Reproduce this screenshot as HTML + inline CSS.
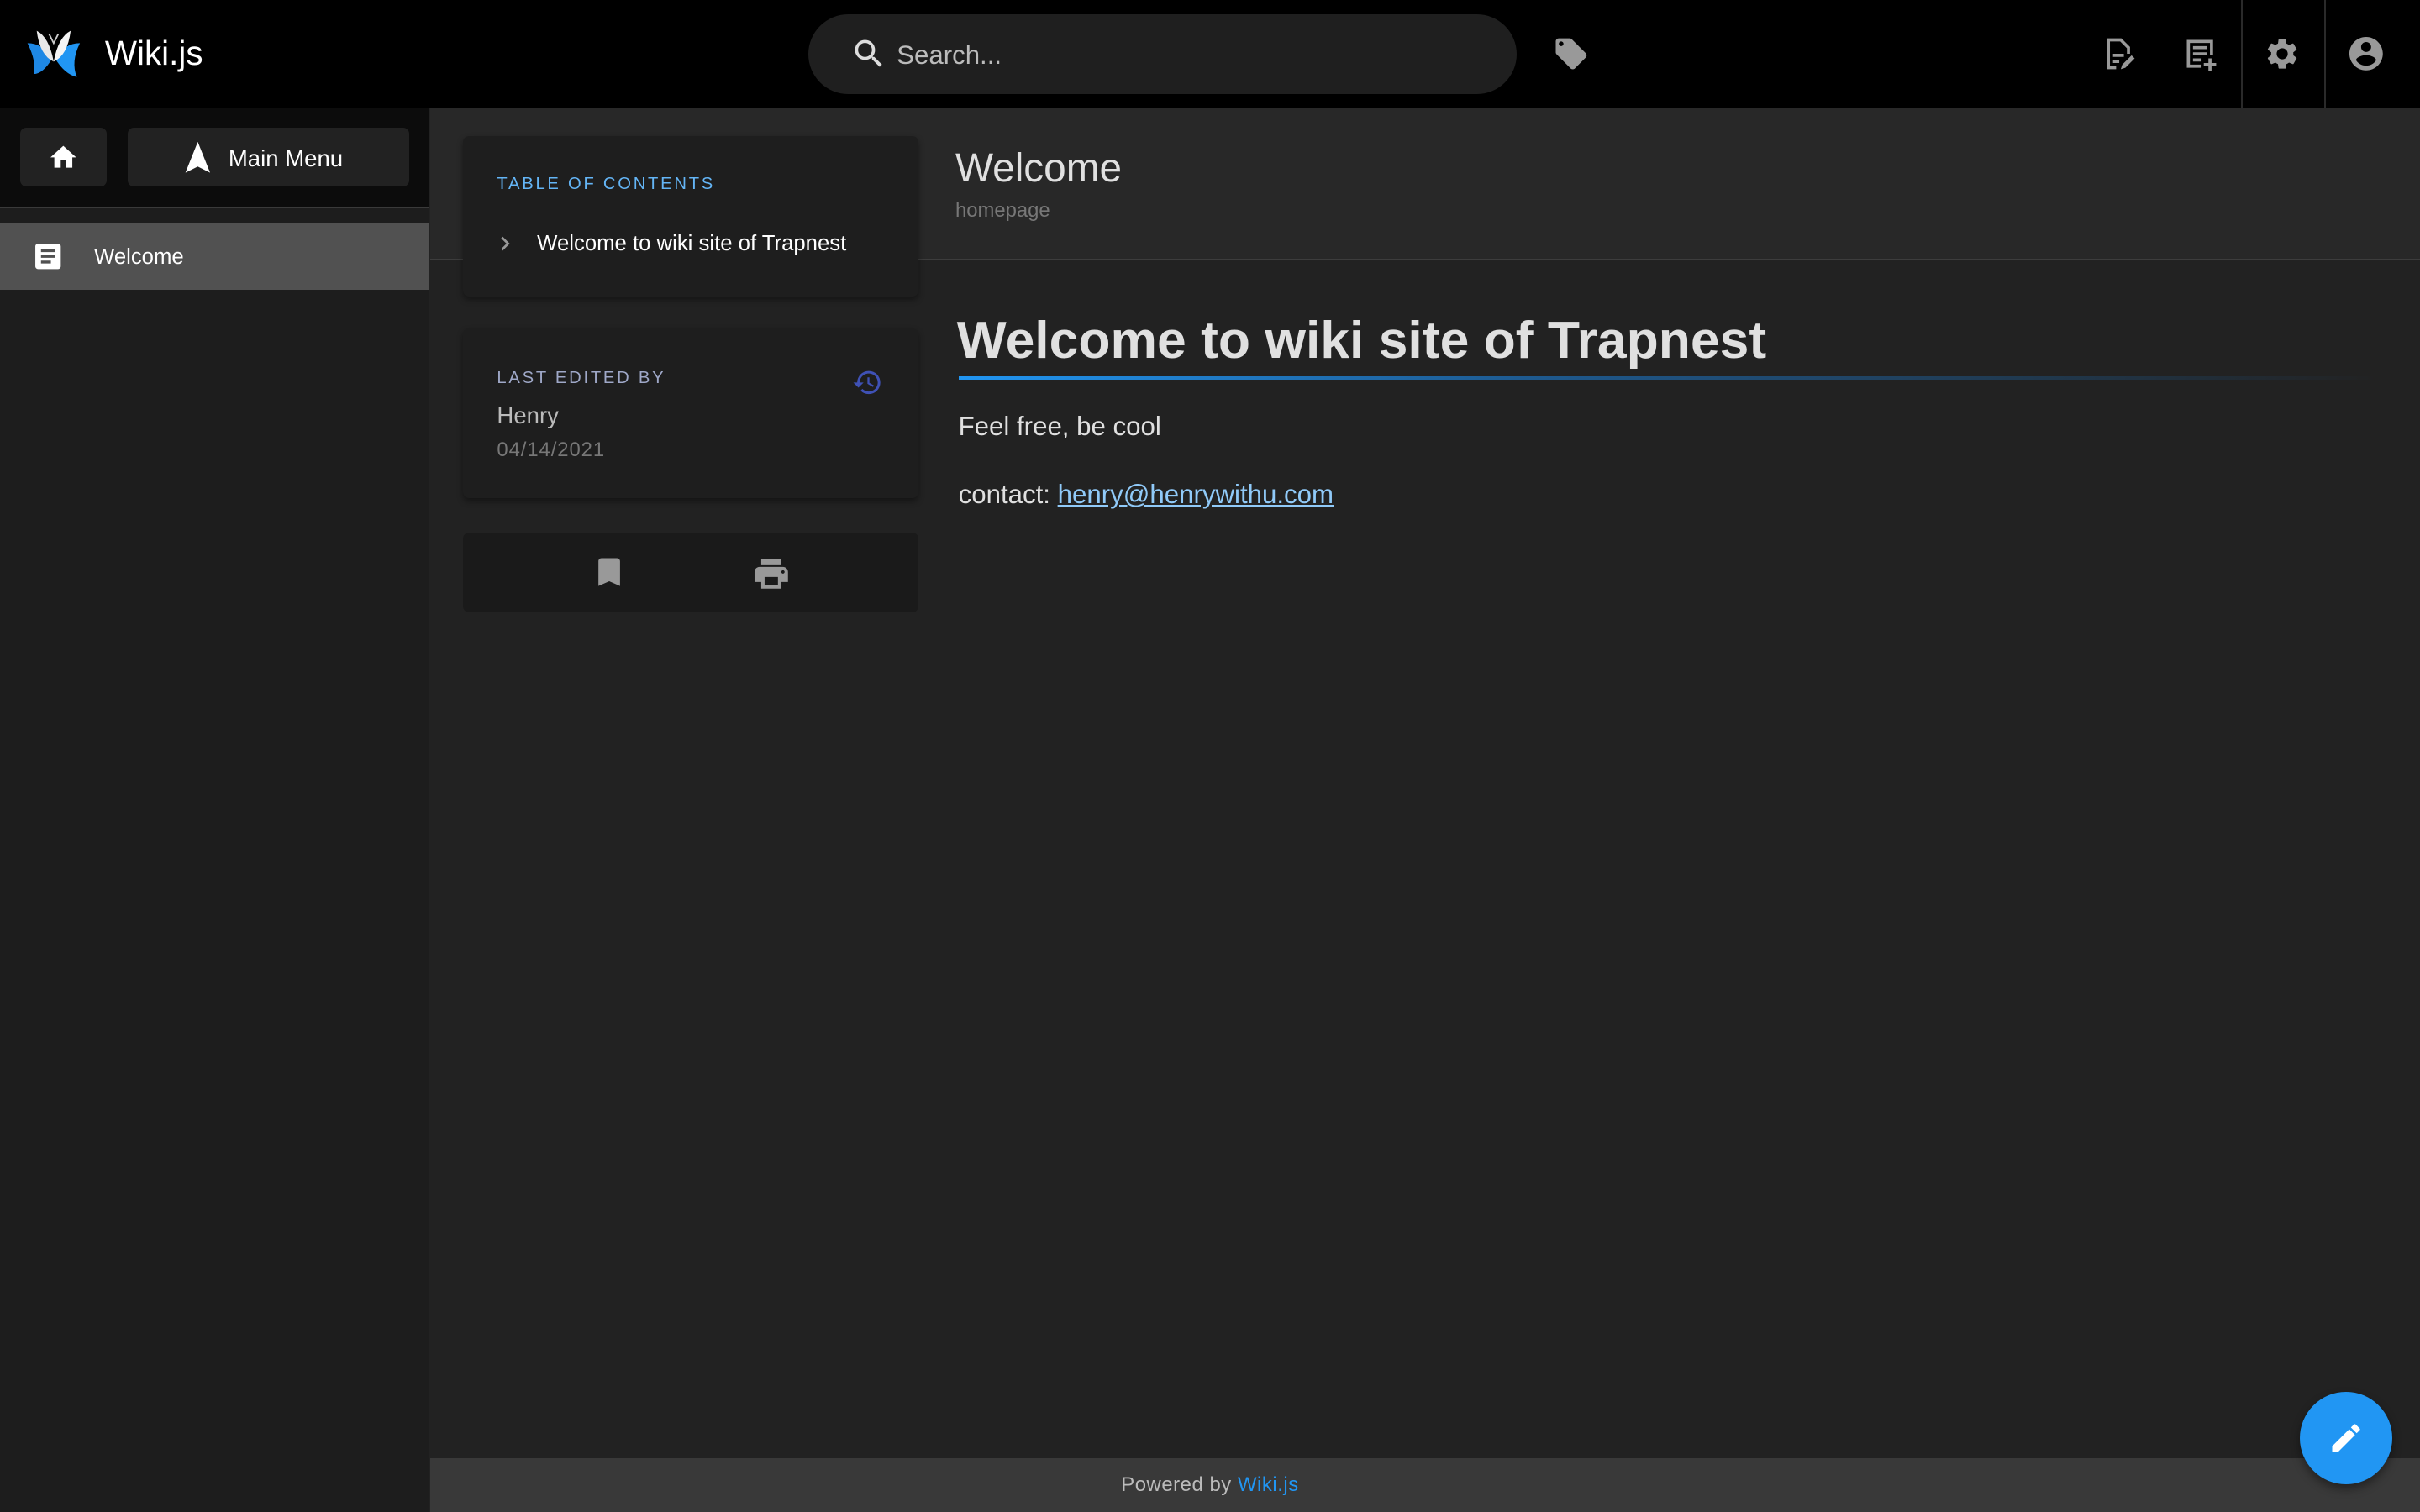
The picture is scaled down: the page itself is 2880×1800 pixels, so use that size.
<!DOCTYPE html>
<html><head><meta charset="utf-8"><style>
*{box-sizing:border-box;margin:0;padding:0}
html,body{width:2880px;height:1800px;overflow:hidden;background:#222}
#w{zoom:1.836735;width:1568px;height:980px;position:relative;font-family:"Liberation Sans",sans-serif;color:#fff;background:#222}
.a{position:absolute}
svg{display:block}
</style></head><body><div id="w">
<div class="a" style="left:0;top:0;width:1568px;height:70px;background:#000"></div>
<svg class="a" style="left:16px;top:18px" width="38" height="34" viewBox="0 0 38 34">
<path d="M2 10 Q12 10 18 20 Q12 30 6 30 Q8 22 2 10Z" fill="#1e88e5"/>
<path d="M36 10 Q26 10 20 20 Q26 30 34 32 Q30 22 36 10Z" fill="#2196f3"/>
<path d="M8 2 Q16 6 19 22 Q10 18 8 2Z" fill="#e8e8e8"/>
<path d="M30 2 Q22 6 19 22 Q28 18 30 2Z" fill="#f5f5f5"/>
<path d="M16 4 L19 10 L22 4" stroke="#ccc" fill="none"/>
</svg>
<div class="a" style="left:68px;top:22px;font-size:22px;color:#fff">Wiki.js</div>
<div class="a" style="left:524px;top:9px;width:459px;height:52px;border-radius:26px;background:#1f1f1f"></div>
<svg class="a" style="left:551px;top:23px" width="24" height="24" viewBox="0 0 24 24"><path fill="#ddd" d="M15.5 14h-.79l-.28-.27A6.470 6.470 0 0 0 16 9.5 6.5 6.5 0 1 0 9.5 16c1.61 0 3.09-.59 4.230-1.57l.27.28v.79l5 4.99L20.490 19l-4.990-5zm-6 0C7.01 14 5 11.99 5 9.5S7.01 5 9.5 5 14 7.01 14 9.5 11.99 14 9.5 14z"/></svg>
<div class="a" style="left:581px;top:26px;font-size:17px;color:#bbb">Search...</div>
<svg class="a" style="left:1005px;top:23px" width="26" height="24" viewBox="0 0 24 24"><path fill="#999" d="M21.41 11.58l-9-9C12.05 2.22 11.55 2 11 2H4c-1.1 0-2 .9-2 2v7c0 .55.22 1.05.59 1.42l9 9c.36.36.86.58 1.41.58.55 0 1.05-.22 1.41-.59l7-7c.37-.36.59-.86.59-1.41 0-.55-.23-1.06-.59-1.42zM5.5 7C4.67 7 4 6.33 4 5.5S4.670 4 5.5 4 7 4.67 7 5.5 6.33 7 5.5 7z"/></svg>
<div class="a" style="left:1399px;top:0;width:1px;height:70px;background:#2a2a2a"></div>
<div class="a" style="left:1452px;top:0;width:1px;height:70px;background:#2a2a2a"></div>
<div class="a" style="left:1506px;top:0;width:1px;height:70px;background:#2a2a2a"></div>
<svg class="a" style="left:1361px;top:23px" width="24" height="24" viewBox="0 0 24 24"><path fill="none" stroke="#999" stroke-width="2" d="M10 21H5V3h8l5 5v4"/><path fill="#999" d="M8 12h7v2H8zM8 16h4v2H8z"/><path fill="#999" d="M13 22l1-3 6-6 2 2-6 6z"/></svg>
<svg class="a" style="left:1414px;top:23px" width="24" height="24" viewBox="0 0 24 24"><path fill="none" stroke="#999" stroke-width="2" d="M12 20H4V4h15v9"/><path fill="#999" d="M7 7h9v2H7zM7 11h9v2H7zM7 15h5v2H7zM17 15h2v3h3v2h-3v3h-2v-3h-3v-2h3z"/></svg>
<svg class="a" style="left:1467px;top:23px" width="24" height="24" viewBox="0 0 24 24"><path fill="#999" d="M19.14 12.94c.04-.3.06-.61.06-.94 0-.32-.02-.64-.07-.94l2.03-1.58a.49.49 0 0 0 .12-.61l-1.92-3.32a.488.488 0 0 0-.59-.22l-2.39.96c-.5-.38-1.03-.7-1.62-.94l-.36-2.54a.484.484 0 0 0-.48-.41h-3.84c-.24 0-.43.17-.47.41l-.36 2.54c-.59.24-1.13.57-1.62.94l-2.39-.96c-.22-.08-.47 0-.59.22L2.74 8.87c-.12.21-.08.47.12.61l2.03 1.58c-.05.3-.09.63-.09.94s.02.64.07.94l-2.03 1.58a.49.49 0 0 0-.12.61l1.92 3.32c.12.22.37.29.59.22l2.39-.96c.5.38 1.03.7 1.62.94l.36 2.54c.05.24.24.41.48.41h3.84c.24 0 .44-.17.47-.41l.36-2.54c.59-.24 1.13-.56 1.62-.94l2.39.96c.22.08.47 0 .59-.22l1.92-3.32c.12-.22.07-.47-.12-.61l-2.01-1.58zM12 15.6c-1.98 0-3.6-1.62-3.6-3.6s1.62-3.6 3.6-3.6 3.6 1.62 3.6 3.6-1.62 3.6-3.6 3.6z"/></svg>
<svg class="a" style="left:1520px;top:22px" width="26" height="26" viewBox="0 0 24 24"><path fill="#999" d="M12 2C6.48 2 2 6.48 2 12s4.48 10 10 10 10-4.48 10-10S17.52 2 12 2zm0 3c1.66 0 3 1.34 3 3s-1.34 3-3 3-3-1.34-3-3 1.34-3 3-3zm0 14.2a7.2 7.2 0 0 1-6-3.22c.03-1.99 4-3.08 6-3.080 1.99 0 5.97 1.09 6 3.08a7.2 7.2 0 0 1-6 3.22z"/></svg>
<div class="a" style="left:0;top:70px;width:278px;height:910px;background:#1d1d1d;border-right:1px solid #333"></div>
<div class="a" style="left:0;top:70px;width:278px;height:65px;background:#0c0c0c;border-bottom:1px solid #3a3a3a"></div>
<div class="a" style="left:13px;top:83px;width:56px;height:38px;background:#222;border-radius:4px"></div>
<svg class="a" style="left:31px;top:92px" width="20" height="20" viewBox="0 0 24 24"><path fill="#fff" d="M10 20v-6h4v6h5v-8h3L12 3 2 12h3v8z"/></svg>
<div class="a" style="left:83px;top:83px;width:182px;height:38px;background:#222;border-radius:4px"></div>
<svg class="a" style="left:118px;top:91px" width="20" height="22" viewBox="0 0 20 22"><path fill="#fff" d="M10 1 L18 21 L10 17 L2 21Z"/></svg>
<div class="a" style="left:148px;top:94px;font-size:15px">Main Menu</div>
<div class="a" style="left:0;top:145px;width:278px;height:43px;background:#515151"></div>
<svg class="a" style="left:20px;top:155px" width="22" height="22" viewBox="0 0 24 24"><path fill="#fff" d="M19 3H5c-1.1 0-2 .9-2 2v14c0 1.1.9 2 2 2h14c1.1 0 2-.9 2-2V5c0-1.1-.9-2-2-2zm-5 14H7v-2h7v2zm3-4H7v-2h10v2zm0-4H7V7h10v2z"/></svg>
<div class="a" style="left:61px;top:159px;font-size:14px;color:#fff">Welcome</div>
<div class="a" style="left:279px;top:70px;width:1289px;height:98px;background:#282828;border-bottom:1px solid #3d3d3d"></div>
<div class="a" style="left:619px;top:94px;font-size:26px;color:#e0e0e0">Welcome</div>
<div class="a" style="left:619px;top:129px;font-size:13px;color:#777">homepage</div>
<div class="a" style="left:300px;top:88px;width:295px;height:104px;background:#1e1e1e;border-radius:4px;box-shadow:0 2px 4px rgba(0,0,0,.4)"></div>
<div class="a" style="left:322px;top:113px;font-size:11px;letter-spacing:1.5px;color:#64b5f6">TABLE OF CONTENTS</div>
<svg class="a" style="left:321px;top:152px" width="12" height="12" viewBox="0 0 12 12"><path d="M4 2l4 4-4 4" stroke="#999" stroke-width="1.5" fill="none"/></svg>
<div class="a" style="left:348px;top:150px;font-size:14px;color:#fff">Welcome to wiki site of Trapnest</div>
<div class="a" style="left:300px;top:213px;width:295px;height:110px;background:#1e1e1e;border-radius:4px;box-shadow:0 2px 4px rgba(0,0,0,.4)"></div>
<div class="a" style="left:322px;top:239px;font-size:11px;letter-spacing:1.5px;color:#9fa8c8">LAST EDITED BY</div>
<div class="a" style="left:322px;top:261px;font-size:15px;color:#bbb">Henry</div>
<div class="a" style="left:322px;top:284px;font-size:13px;color:#777;letter-spacing:.5px">04/14/2021</div>
<svg class="a" style="left:552px;top:238px" width="20" height="20" viewBox="0 0 24 24"><path fill="#3f51b5" d="M13 3a9 9 0 0 0-9 9H1l3.89 3.89.07.14L9 12H6c0-3.87 3.13-7 7-7s7 3.13 7 7-3.13 7-7 7c-1.93 0-3.68-.79-4.94-2.06l-1.42 1.42A8.954 8.954 0 0 0 13 21a9 9 0 0 0 0-18zm-1 5v5l4.28 2.54.72-1.21-3.5-2.08V8H12z"/></svg>
<div class="a" style="left:300px;top:345px;width:295px;height:52px;background:#1a1a1a;border-radius:4px"></div>
<svg class="a" style="left:383px;top:359px" width="24" height="24" viewBox="0 0 24 24"><path fill="#999" d="M17 3H7c-1.1 0-2 .9-2 2v16l7-3 7 3V5c0-1.1-.9-2-2-2z"/></svg>
<svg class="a" style="left:487px;top:359px" width="26" height="26" viewBox="0 0 24 24"><path fill="#999" d="M19 8H5c-1.66 0-3 1.34-3 3v6h4v4h12v-4h4v-6c0-1.66-1.34-3-3-3zm-3 11H8v-5h8v5zm3-7c-.55 0-1-.45-1-1s.45-1 1-1 1 .45 1 1-.45 1-1 1zm-1-9H6v4h12V3z"/></svg>
<div class="a" style="left:620px;top:201px;font-size:34px;font-weight:bold;color:#e0e0e0">Welcome to wiki site of Trapnest</div>
<div class="a" style="left:621px;top:244px;width:920px;height:2px;background:linear-gradient(90deg,#2196f3 0%,#1e5a90 40%,rgba(33,33,33,0) 100%)"></div>
<div class="a" style="left:621px;top:267px;font-size:17px;color:#e0e0e0">Feel free, be cool</div>
<div class="a" style="left:621px;top:311px;font-size:17px;color:#e0e0e0">contact: <span style="color:#90caf9;text-decoration:underline">henry@henrywithu.com</span></div>
<div class="a" style="left:279px;top:945px;width:1289px;height:35px;background:#393939"></div>
<div class="a" style="left:279px;top:955px;width:1010px;text-align:center;font-size:13px;color:#bbb;letter-spacing:.3px">Powered by <span style="color:#2196f3">Wiki.js</span></div>
<div class="a" style="left:1490px;top:902px;width:60px;height:60px;border-radius:50%;background:#2196f3;box-shadow:0 3px 6px rgba(0,0,0,.4)"></div>
<svg class="a" style="left:1508px;top:920px" width="24" height="24" viewBox="0 0 24 24"><path fill="#fff" d="M3 17.25V21h3.75L17.81 9.94l-3.75-3.75L3 17.25zM20.71 7.04a1 1 0 0 0 0-1.41l-2.34-2.34a1 1 0 0 0-1.41 0l-1.83 1.83 3.75 3.75 1.83-1.83z"/></svg>
</div></body></html>
